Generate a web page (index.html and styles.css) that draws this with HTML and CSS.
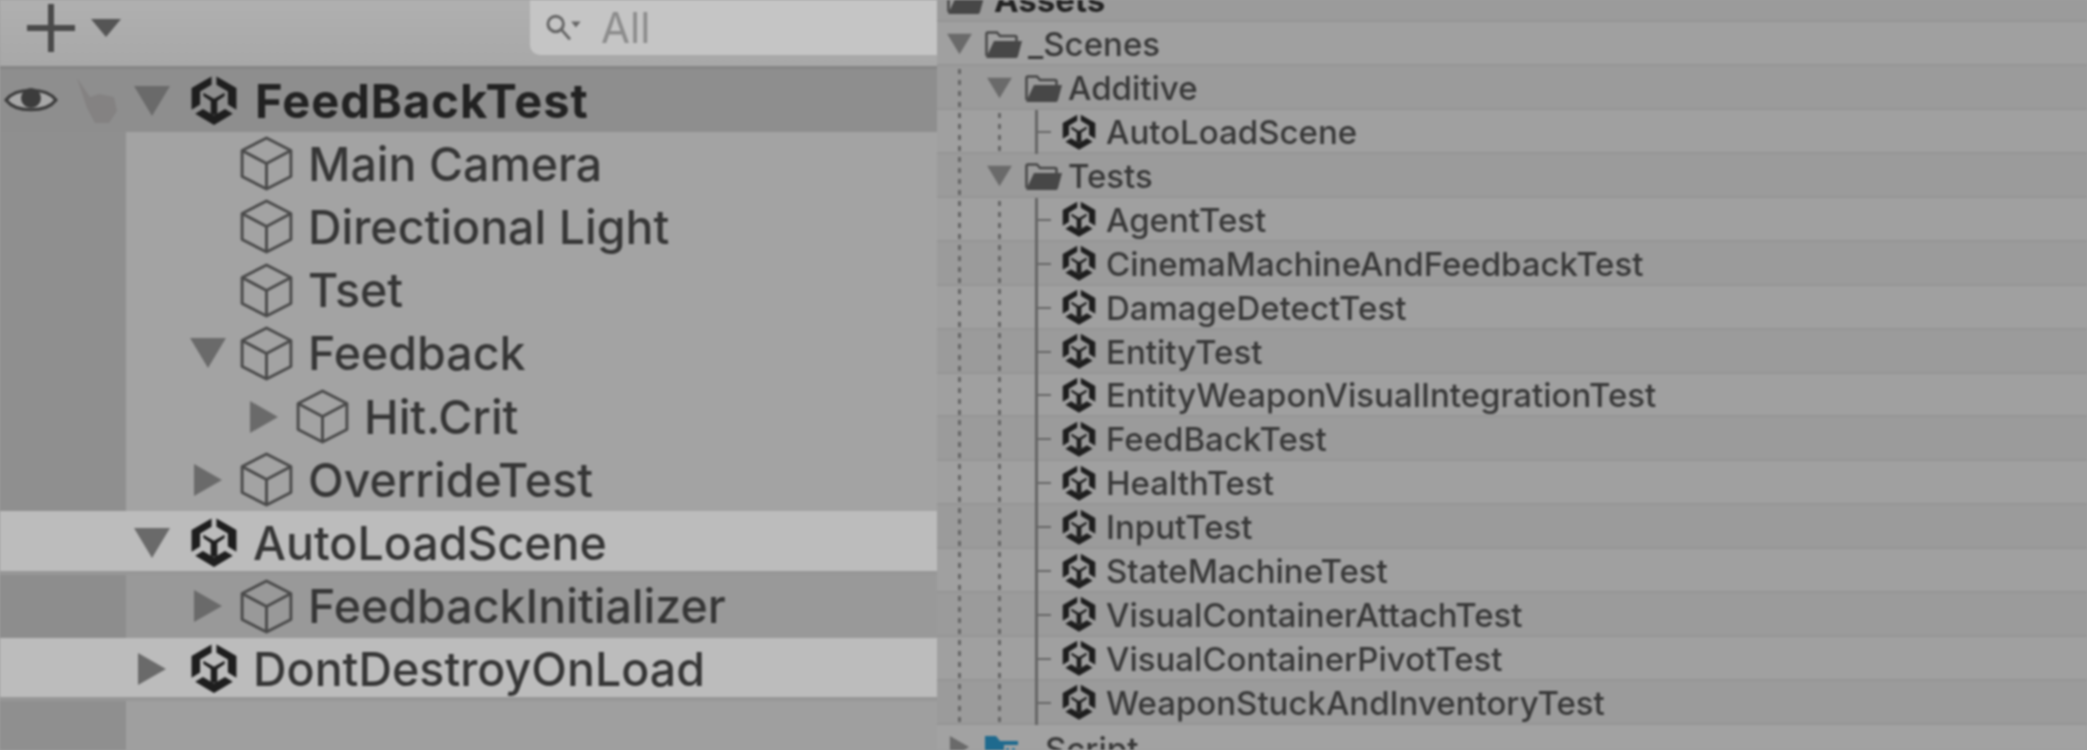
FILE: index.html
```html
<!DOCTYPE html>
<html lang="en">
<head>
    <meta charset="UTF-8">
    <title>Hierarchy and Project</title>
    <link rel="stylesheet" href="styles.css">
</head>
<body>
    <!-- shared icons -->
    <svg class="defs" width="0" height="0">
        <symbol id="unity" viewBox="0.500 0 23 24.500">
            <path d="M10.800.3 1 5.900V16.500L5.200 14V7.600L10.800 4.300Z"/>
            <path d="M13.200.3 23 5.900V16.500L18.800 14V7.600L13.200 4.300Z"/>
            <path d="M6.800 8.200 12 11.200 17.200 8.200V9.800L13.600 12.200V19H10.400V12.200L6.800 9.800Z"/>
            <path d="M2.800 18.500 6.600 16.200 12 19.400 17.400 16.200 21.200 18.500 12 24Z"/>
        </symbol>
        <symbol id="cube" viewBox="0 0 51 53">
            <path d="M25.500 2 49 14v25L25.500 51 2 39V14ZM2 14l23.500 12.500L49 14M25.500 26.500V51" fill="none" stroke="currentColor" stroke-width="2.800" stroke-linejoin="round"/>
        </symbol>
        <symbol id="down" viewBox="0 0 36 32"><path d="M0 1h36L18 31Z"/></symbol>
        <symbol id="right" viewBox="0 0 36 32"><path d="M4 0l28 16L4 32Z"/></symbol>
        <symbol id="folder" viewBox="0 0 37 27">
            <path d="M1.500 25V3q0-1.500 1.500-1.500h9l3 3.500h15q1.500 0 1.500 1.500V10" fill="none" stroke="currentColor" stroke-width="2.500"/>
            <path d="M9 10h28l-4 15q-.5 2-2 2H1Z"/>
        </symbol>
    </svg>

    <div class="page">
        <!-- left panel -->
        <section class="hierarchy">
            <div class="toolbar">
                <svg class="plus" viewBox="0 0 48 48"><path d="M24 0v48M0 24h48"/></svg>
                <svg class="drop" viewBox="0 0 30 18"><path d="M0 0h30L15 18Z"/></svg>
                <div class="search">
                    <svg class="glass" viewBox="0 0 32 24"><circle cx="9" cy="9" r="6.500"/><path d="M14 14l7 8"/><path class="tip" d="M22 7h8l-4 5Z"/></svg>
                    <span>All</span>
                </div>
            </div>

            <div class="tree">
                <div class="row scene-open d0">
                    <div class="gutter">
                        <svg class="eye" viewBox="0 0 54 32"><path class="lid" d="M2 16C12 3 42 3 52 16 42 29 12 29 2 16Z"/><circle cx="27" cy="14" r="10"/></svg>
                        <svg class="hand" viewBox="0 0 45 45"><path d="M2 0l13 19 9-3 15 3 3 14-8 12H20L12 30Z"/></svg>
                    </div>
                    <div class="slot"><svg class="arrow"><use href="#down"/></svg></div>
                    <svg class="unity"><use href="#unity"/></svg>
                    <span class="label bold">FeedBackTest</span>
                </div>
                <div class="row d1">
                    <div class="gutter"></div>
                    <div class="slot"></div>
                    <svg class="cube"><use href="#cube"/></svg>
                    <span class="label">Main Camera</span>
                </div>
                <div class="row d1">
                    <div class="gutter"></div>
                    <div class="slot"></div>
                    <svg class="cube"><use href="#cube"/></svg>
                    <span class="label">Directional Light</span>
                </div>
                <div class="row d1">
                    <div class="gutter"></div>
                    <div class="slot"></div>
                    <svg class="cube"><use href="#cube"/></svg>
                    <span class="label">Tset</span>
                </div>
                <div class="row d1">
                    <div class="gutter"></div>
                    <div class="slot"><svg class="arrow"><use href="#down"/></svg></div>
                    <svg class="cube"><use href="#cube"/></svg>
                    <span class="label">Feedback</span>
                </div>
                <div class="row d2">
                    <div class="gutter"></div>
                    <div class="slot"><svg class="arrow"><use href="#right"/></svg></div>
                    <svg class="cube"><use href="#cube"/></svg>
                    <span class="label">Hit.Crit</span>
                </div>
                <div class="row d1">
                    <div class="gutter"></div>
                    <div class="slot"><svg class="arrow"><use href="#right"/></svg></div>
                    <svg class="cube"><use href="#cube"/></svg>
                    <span class="label">OverrideTest</span>
                </div>
                <div class="row scene d0">
                    <div class="gutter"></div>
                    <div class="slot"><svg class="arrow"><use href="#down"/></svg></div>
                    <svg class="unity"><use href="#unity"/></svg>
                    <span class="label">AutoLoadScene</span>
                </div>
                <div class="row dim d1">
                    <div class="gutter"></div>
                    <div class="slot"><svg class="arrow"><use href="#right"/></svg></div>
                    <svg class="cube"><use href="#cube"/></svg>
                    <span class="label">FeedbackInitializer</span>
                </div>
                <div class="row scene d0">
                    <div class="gutter"></div>
                    <div class="slot"><svg class="arrow"><use href="#right"/></svg></div>
                    <svg class="unity"><use href="#unity"/></svg>
                    <span class="label">DontDestroyOnLoad</span>
                </div>
            </div>
        </section>

        <!-- right panel -->
        <section class="project">
            <div class="item dark root">
                <svg class="pfolder"><use href="#folder"/></svg>
                <span class="name bold">Assets</span>
            </div>
            <div class="item">
                <div class="twig"><svg class="parrow"><use href="#down"/></svg></div>
                <svg class="pfolder"><use href="#folder"/></svg>
                <span class="name">_Scenes</span>
            </div>
            <div class="item dark">
                <div class="dots"></div>
                <div class="twig"><svg class="parrow"><use href="#down"/></svg></div>
                <svg class="pfolder"><use href="#folder"/></svg>
                <span class="name">Additive</span>
            </div>
            <div class="item">
                <div class="dots"></div><div class="dots"></div><div class="tick"></div>
                <svg class="punity"><use href="#unity"/></svg>
                <span class="name">AutoLoadScene</span>
            </div>
            <div class="item dark">
                <div class="dots"></div>
                <div class="twig"><svg class="parrow"><use href="#down"/></svg></div>
                <svg class="pfolder"><use href="#folder"/></svg>
                <span class="name">Tests</span>
            </div>
            <div class="item">
                <div class="dots"></div><div class="dots"></div><div class="tick"></div>
                <svg class="punity"><use href="#unity"/></svg>
                <span class="name">AgentTest</span>
            </div>
            <div class="item dark">
                <div class="dots"></div><div class="dots"></div><div class="tick"></div>
                <svg class="punity"><use href="#unity"/></svg>
                <span class="name">CinemaMachineAndFeedbackTest</span>
            </div>
            <div class="item">
                <div class="dots"></div><div class="dots"></div><div class="tick"></div>
                <svg class="punity"><use href="#unity"/></svg>
                <span class="name">DamageDetectTest</span>
            </div>
            <div class="item dark">
                <div class="dots"></div><div class="dots"></div><div class="tick"></div>
                <svg class="punity"><use href="#unity"/></svg>
                <span class="name">EntityTest</span>
            </div>
            <div class="item">
                <div class="dots"></div><div class="dots"></div><div class="tick"></div>
                <svg class="punity"><use href="#unity"/></svg>
                <span class="name">EntityWeaponVisualIntegrationTest</span>
            </div>
            <div class="item dark">
                <div class="dots"></div><div class="dots"></div><div class="tick"></div>
                <svg class="punity"><use href="#unity"/></svg>
                <span class="name">FeedBackTest</span>
            </div>
            <div class="item">
                <div class="dots"></div><div class="dots"></div><div class="tick"></div>
                <svg class="punity"><use href="#unity"/></svg>
                <span class="name">HealthTest</span>
            </div>
            <div class="item dark">
                <div class="dots"></div><div class="dots"></div><div class="tick"></div>
                <svg class="punity"><use href="#unity"/></svg>
                <span class="name">InputTest</span>
            </div>
            <div class="item">
                <div class="dots"></div><div class="dots"></div><div class="tick"></div>
                <svg class="punity"><use href="#unity"/></svg>
                <span class="name">StateMachineTest</span>
            </div>
            <div class="item dark">
                <div class="dots"></div><div class="dots"></div><div class="tick"></div>
                <svg class="punity"><use href="#unity"/></svg>
                <span class="name">VisualContainerAttachTest</span>
            </div>
            <div class="item">
                <div class="dots"></div><div class="dots"></div><div class="tick"></div>
                <svg class="punity"><use href="#unity"/></svg>
                <span class="name">VisualContainerPivotTest</span>
            </div>
            <div class="item dark">
                <div class="dots"></div><div class="dots"></div><div class="tick"></div>
                <svg class="punity"><use href="#unity"/></svg>
                <span class="name">WeaponStuckAndInventoryTest</span>
            </div>
            <div class="item last">
                <div class="twig"><svg class="parrow"><use href="#right"/></svg></div>
                <svg class="script" viewBox="0 0 33 30"><path d="M0 0h11l4 5h18v4H19v21H0Z"/><path class="bars" d="M21 12h3v10h-3ZM27 12h3v10h-3Z"/></svg>
                <span class="name">Script</span>
            </div>
        </section>
    </div>
</body>
</html>
```

FILE: styles.css
```css
html,body{
    margin: 0;
    height: 750px;
    overflow: hidden;
    background: #a0a0a0;
}
.defs{
    position: absolute;
}
.page{
    display: flex;
    height: 750px;
    overflow: hidden;
    font-family: Inter, "Noto Sans", sans-serif;
    /* the shot is an upscaled capture, everything is a bit soft */
    filter: blur(.9px);
}

/* left panel */
.hierarchy{
    width: 937px;
    flex: none;
    background: #9f9f9f;
}
.toolbar{
    display: flex;
    box-sizing: border-box;
    height: 69px;
    padding-left: 27px;
    background: linear-gradient(#b0b0b0,#a8a8a8);
    border-bottom: 3px solid #858585;
}
.plus{
    width: 48px;
    height: 48px;
    margin-top: 4px;
    fill: none;
    stroke: #4a4a4a;
    stroke-width: 6;
}
.drop{
    width: 30px;
    height: 18px;
    margin: 19px 0 0 16px;
    fill: #555;
}
.search{
    display: flex;
    align-items: center;
    box-sizing: border-box;
    width: 407px;
    height: 55px;
    margin-left: auto;
    padding-left: 15px;
    gap: 18px;
    background: #c5c5c5;
    border-bottom-left-radius: 10px;
    color: #8c8c8c;
    font-size: 42px;
}
.glass{
    width: 38px;
    height: 29px;
    fill: none;
    stroke: #666;
    stroke-width: 2.500;
}
.glass .tip{
    fill: #666;
    stroke: none;
}

.tree{
    height: 681px;
    background: linear-gradient(90deg,#8f8f8f 126px,#9f9f9f 126px);
}
.row{
    display: flex;
    align-items: center;
    box-sizing: border-box;
    height: 63.2px;
    background: linear-gradient(90deg,#8f8f8f 126px,#a3a3a3 126px);
    color: #363636;
}
.scene-open{
    background: #8e8e8e;
}
.scene{
    background: #bcbcbc;
    box-shadow: inset 0 -4px 0 #979797;
}
.dim{
    background: linear-gradient(90deg,#8d8d8d 126px,#999 126px);
}
.gutter{
    display: flex;
    align-items: center;
    flex: none;
    width: 126px;
}
.eye{
    width: 54px;
    height: 32px;
    margin: 0 0 2px 4px;
    fill: #3c3c3c;
}
.eye .lid{
    fill: #a8a8a8;
    stroke: #3c3c3c;
    stroke-width: 3;
}
.hand{
    width: 45px;
    height: 45px;
    margin-left: 17px;
    fill: #848282;
}
.slot{
    display: flex;
    flex: none;
    width: 56px;
    padding-left: 4px;
    box-sizing: border-box;
}
.d0 .slot{
    margin-left: 4px;
    margin-right: 4px;
}
.d1 .slot{
    margin-left: 60px;
}
.d2 .slot{
    margin-left: 116px;
}
.arrow{
    width: 36px;
    height: 32px;
    fill: #6a6a6a;
}
.unity{
    flex: none;
    width: 48px;
    height: 50px;
    margin-right: 15px;
    fill: #1e1e1e;
}
.cube{
    flex: none;
    width: 53px;
    height: 55px;
    margin: 0 15px 0 -2px;
    color: #4a4a4a;
}
.label{
    font-size: 46.5px;
    font-weight: 500;
    white-space: nowrap;
}
.label.bold{
    font-size: 47px;
    font-weight: 700;
    letter-spacing: 1px;
    margin-left: 2px;
}
.bold{
    font-weight: 700;
    color: #222;
}

/* right panel */
.project{
    flex: 1;
    min-width: 0;
    margin-top: -21.5px;
}
.item{
    display: flex;
    align-items: center;
    height: 43.9px;
    background: #a0a0a0;
    box-shadow: inset 0 -2px 0 #959595;
    color: #383838;
}
.dark{
    background: #9b9b9b;
}
.root{
    padding-left: 10px;
}
.last{
    background: #a2a2a2;
    box-shadow: none;
}
.dots{
    align-self: stretch;
    flex: none;
    width: 40px;
    background: repeating-linear-gradient(#666 0 5px,transparent 5px 11px) no-repeat 21px 3px / 3px 100%;
}
.tick{
    align-self: stretch;
    flex: none;
    width: 45px;
    background:
        linear-gradient(#666,#666) no-repeat 18px 0 / 3px 100%,
        linear-gradient(#666,#666) no-repeat 18px 50% / 16px 2px;
}
.twig{
    display: flex;
    justify-content: center;
    flex: none;
    width: 44px;
    margin-right: 4px;
}
.parrow{
    width: 25px;
    height: 22px;
    fill: #6a6a6a;
}
.pfolder{
    flex: none;
    width: 37px;
    height: 27px;
    margin-right: 6px;
    color: #474747;
    fill: #474747;
}
.root .pfolder{
    margin-right: 10px;
}
.punity{
    flex: none;
    width: 34px;
    height: 37px;
    margin-right: 10px;
    fill: #1e1e1e;
}
.script{
    flex: none;
    width: 33px;
    height: 30px;
    margin: 8px 27px 0 0;
    fill: #1f6a8e;
}
.script .bars{
    fill: #2f7ca0;
}
.name{
    font-size: 33px;
    font-weight: 500;
    white-space: nowrap;
}
.name.bold{
    font-weight: 700;
}
.last .name{
    margin-top: 4px;
}
```
